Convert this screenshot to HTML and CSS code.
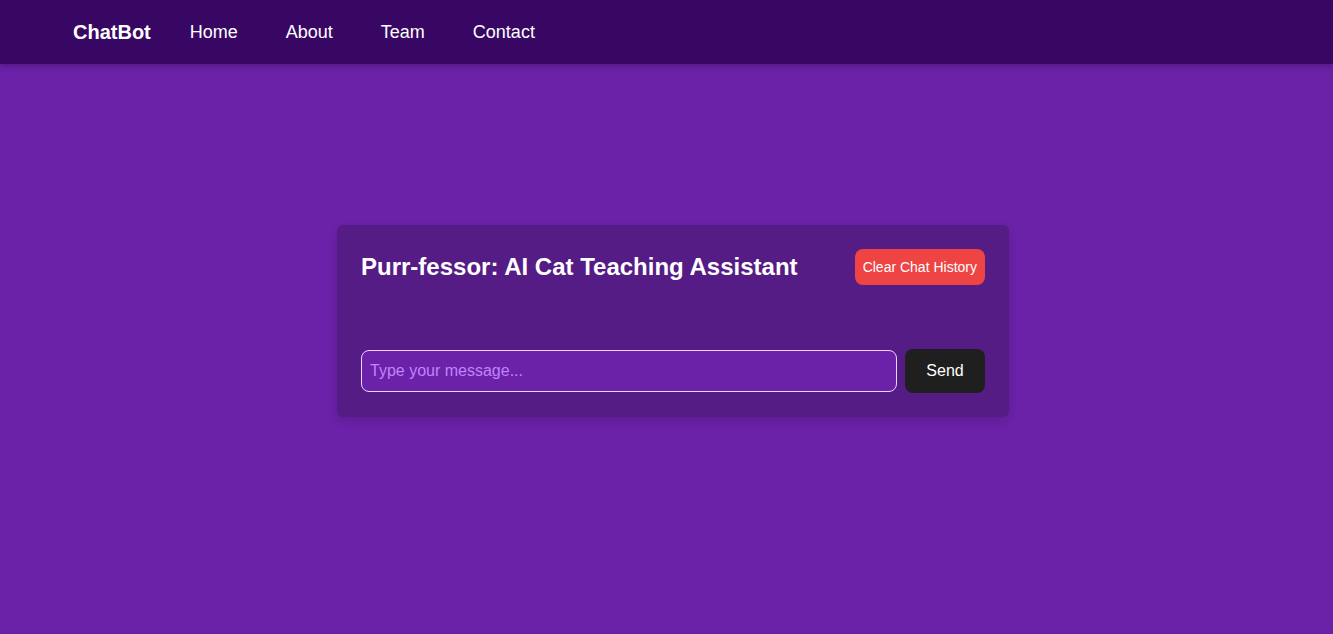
FILE: index.html
```html
<!DOCTYPE html>
<html lang="en">
<head>
<meta charset="utf-8">
<title>ChatBot</title>
<link rel="stylesheet" href="styles.css">
</head>
<body>
<header class="topbar">
  <div class="brand">ChatBot</div>
  <nav class="nav">
    <a href="#" class="nav-link">Home</a>
    <a href="#" class="nav-link">About</a>
    <a href="#" class="nav-link">Team</a>
    <a href="#" class="nav-link">Contact</a>
  </nav>
</header>
<main class="main">
  <section class="card">
    <div class="card-head">
      <h1 class="title">Purr-fessor: AI Cat Teaching Assistant</h1>
      <button class="clear-btn">Clear Chat History</button>
    </div>
    <div class="messages"></div>
    <form class="input-row" onsubmit="return false;">
      <input class="msg-input" type="text" placeholder="Type your message...">
      <button class="send-btn" type="submit">Send</button>
    </form>
  </section>
</main>
</body>
</html>
```

FILE: styles.css
```css
* { box-sizing: border-box; }
html, body { margin: 0; padding: 0; }
body {
  background: #6b21a8;
  font-family: "Liberation Sans", Arial, sans-serif;
  color: #fff;
  min-height: 634px;
}
.topbar {
  height: 64px;
  background: #380764;
  display: flex;
  align-items: center;
  padding-left: 73px;
  box-shadow: 0 2px 6px rgba(0,0,0,0.25);
}
.brand {
  font-size: 20px;
  font-weight: bold;
  margin-right: 39px;
}
.nav {
  display: flex;
  gap: 48px;
}
.nav-link {
  color: #fff;
  text-decoration: none;
  font-size: 18px;
}
.main {
  display: flex;
  justify-content: center;
  padding-top: 161px;
  padding-left: 13px;
}
.card {
  width: 672px;
  background: #541c84;
  border-radius: 6px;
  padding: 24px;
  box-shadow: 0 4px 10px rgba(0,0,0,0.12);
}
.card-head {
  display: flex;
  justify-content: space-between;
  align-items: center;
}
.title {
  margin: 0;
  font-size: 24px;
  font-weight: bold;
  line-height: 32px;
}
.clear-btn {
  background: #ef4444;
  color: #fff;
  border: none;
  border-radius: 8px;
  font-family: inherit;
  font-size: 14px;
  height: 36px;
  padding: 0 8px;
}
.messages {
  height: 64px;
}
.input-row {
  display: flex;
  gap: 8px;
  align-items: center;
  margin: 0;
}
.msg-input {
  flex: 1;
  height: 42px;
  background: #6b21a8;
  border: 1px solid #e9d5ff;
  border-radius: 8px;
  padding: 0 8px;
  font-family: inherit;
  font-size: 16px;
  color: #fff;
  outline: none;
}
.msg-input::placeholder { color: #c084fc; }
.send-btn {
  width: 80px;
  height: 44px;
  background: #1f1f1f;
  color: #fff;
  border: none;
  border-radius: 8px;
  font-family: inherit;
  font-size: 16px;
}
```
